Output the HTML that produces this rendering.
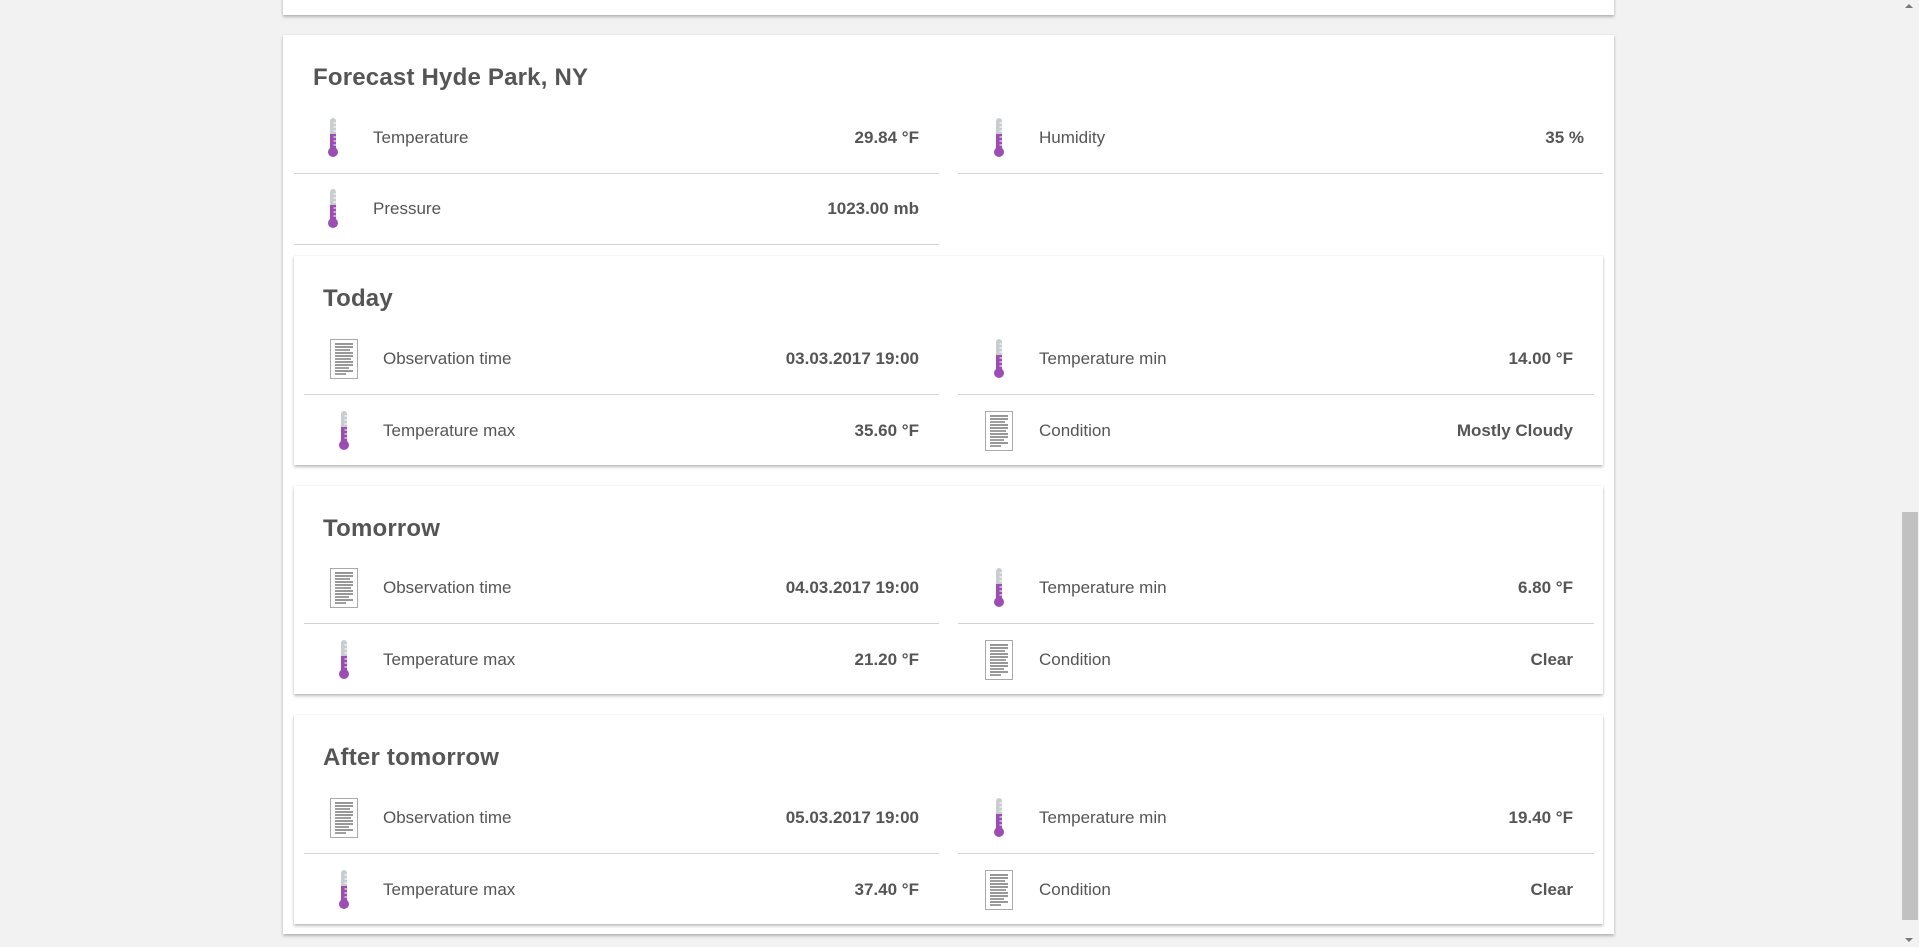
<!DOCTYPE html>
<html><head><meta charset="utf-8"><style>
*{box-sizing:border-box;margin:0;padding:0}
body{width:1919px;height:947px;background:#f2f2f2;font-family:"Liberation Sans",Arial,sans-serif;color:#555;position:relative;overflow:hidden}
.card{position:absolute;background:#fff;box-shadow:0 2px 3px rgba(0,0,0,.25),0 0 2px rgba(0,0,0,.08)}
.t{position:absolute;font-size:24px;font-weight:bold;color:#555;letter-spacing:0.2px}
.row{position:absolute;height:71px;border-bottom:1px solid #d4d4d4}
.row .ic{position:absolute;top:50%;transform:translate(-50%,-50%)}
.row .l{position:absolute;top:50%;transform:translateY(-50%);font-size:17px}
.row .v{position:absolute;top:50%;right:16px;transform:translateY(-50%);font-size:17px;font-weight:bold}
.nb{border-bottom:none}
.sb{position:absolute;right:0;top:0;width:19px;height:947px;background:#f2f2f2}
</style></head><body>
<svg width="0" height="0" style="position:absolute">
<defs>
<symbol id="th" viewBox="0 0 11 40"><rect x="2.5" y="0" width="6" height="32" rx="3" fill="#c9cdd0"/><rect x="2.5" y="16" width="6" height="18" fill="#9c4db3"/><circle cx="5.5" cy="34" r="5" fill="#9c4db3"/><g stroke="#fff" stroke-width="1"><line x1="6" y1="5" x2="8.5" y2="5"/><line x1="6" y1="9" x2="8.5" y2="9"/><line x1="6" y1="13" x2="8.5" y2="13"/><line x1="6" y1="19" x2="8.5" y2="19"/><line x1="6" y1="23" x2="8.5" y2="23"/><line x1="6" y1="27" x2="8.5" y2="27"/></g></symbol>
<symbol id="doc" viewBox="0 0 28 40"><rect x="0.5" y="0.5" width="27" height="39" fill="#fff" stroke="#aaa"/><g stroke="#777" stroke-width="1.4"><line x1="5" y1="5" x2="23" y2="5"/><line x1="5" y1="8" x2="23" y2="8"/><line x1="5" y1="11" x2="20" y2="11"/><line x1="5" y1="14" x2="23" y2="14"/><line x1="5" y1="17" x2="23" y2="17"/><line x1="5" y1="20" x2="21" y2="20"/><line x1="5" y1="23" x2="23" y2="23"/><line x1="5" y1="26" x2="23" y2="26"/><line x1="5" y1="29" x2="19" y2="29"/><line x1="5" y1="32" x2="23" y2="32"/><line x1="5" y1="35" x2="16" y2="35"/></g></symbol>
</defs></svg>

<div class="card" style="left:283px;top:-10px;width:1331px;height:25px"></div>

<div class="card" style="left:283px;top:35px;width:1331px;height:899px"></div>
<div class="t" style="left:313px;top:64px">Forecast Hyde Park, NY</div>

<div class="row" style="left:294px;top:103px;width:645px"><svg class="ic" style="left:39px" width="11" height="40"><use href="#th"/></svg><span class="l" style="left:79px">Temperature</span><span class="v" style="right:20px">29.84 °F</span></div>
<div class="row" style="left:958px;top:103px;width:645px"><svg class="ic" style="left:41px" width="11" height="40"><use href="#th"/></svg><span class="l" style="left:81px">Humidity</span><span class="v" style="right:19px">35 %</span></div>
<div class="row" style="left:294px;top:174px;width:645px"><svg class="ic" style="left:39px" width="11" height="40"><use href="#th"/></svg><span class="l" style="left:79px">Pressure</span><span class="v" style="right:20px">1023.00 mb</span></div>

<!-- Today -->
<div class="card" style="left:294px;top:256px;width:1309px;height:209px"></div>
<div class="t" style="left:323px;top:285px">Today</div>
<div class="row" style="left:304px;top:324px;width:635px"><svg class="ic" style="left:40px" width="28" height="40"><use href="#doc"/></svg><span class="l" style="left:79px">Observation time</span><span class="v" style="right:20px">03.03.2017 19:00</span></div>
<div class="row" style="left:958px;top:324px;width:636px"><svg class="ic" style="left:41px" width="11" height="40"><use href="#th"/></svg><span class="l" style="left:81px">Temperature min</span><span class="v" style="right:21px">14.00 °F</span></div>
<div class="row nb" style="left:304px;top:395px;width:635px"><svg class="ic" style="left:40px" width="11" height="40"><use href="#th"/></svg><span class="l" style="left:79px">Temperature max</span><span class="v" style="right:20px">35.60 °F</span></div>
<div class="row nb" style="left:958px;top:395px;width:636px"><svg class="ic" style="left:41px" width="28" height="40"><use href="#doc"/></svg><span class="l" style="left:81px">Condition</span><span class="v" style="right:21px">Mostly Cloudy</span></div>

<!-- Tomorrow -->
<div class="card" style="left:294px;top:486px;width:1309px;height:208px"></div>
<div class="t" style="left:323px;top:515px">Tomorrow</div>
<div class="row" style="left:304px;top:553px;width:635px"><svg class="ic" style="left:40px" width="28" height="40"><use href="#doc"/></svg><span class="l" style="left:79px">Observation time</span><span class="v" style="right:20px">04.03.2017 19:00</span></div>
<div class="row" style="left:958px;top:553px;width:636px"><svg class="ic" style="left:41px" width="11" height="40"><use href="#th"/></svg><span class="l" style="left:81px">Temperature min</span><span class="v" style="right:21px">6.80 °F</span></div>
<div class="row nb" style="left:304px;top:624px;width:635px"><svg class="ic" style="left:40px" width="11" height="40"><use href="#th"/></svg><span class="l" style="left:79px">Temperature max</span><span class="v" style="right:20px">21.20 °F</span></div>
<div class="row nb" style="left:958px;top:624px;width:636px"><svg class="ic" style="left:41px" width="28" height="40"><use href="#doc"/></svg><span class="l" style="left:81px">Condition</span><span class="v" style="right:21px">Clear</span></div>

<!-- After tomorrow -->
<div class="card" style="left:294px;top:715px;width:1309px;height:209px"></div>
<div class="t" style="left:323px;top:744px">After tomorrow</div>
<div class="row" style="left:304px;top:783px;width:635px"><svg class="ic" style="left:40px" width="28" height="40"><use href="#doc"/></svg><span class="l" style="left:79px">Observation time</span><span class="v" style="right:20px">05.03.2017 19:00</span></div>
<div class="row" style="left:958px;top:783px;width:636px"><svg class="ic" style="left:41px" width="11" height="40"><use href="#th"/></svg><span class="l" style="left:81px">Temperature min</span><span class="v" style="right:21px">19.40 °F</span></div>
<div class="row nb" style="left:304px;top:854px;width:635px"><svg class="ic" style="left:40px" width="11" height="40"><use href="#th"/></svg><span class="l" style="left:79px">Temperature max</span><span class="v" style="right:20px">37.40 °F</span></div>
<div class="row nb" style="left:958px;top:854px;width:636px"><svg class="ic" style="left:41px" width="28" height="40"><use href="#doc"/></svg><span class="l" style="left:81px">Condition</span><span class="v" style="right:21px">Clear</span></div>

<div class="sb"><div style="position:absolute;left:5px;top:4px;width:0;height:0;border-left:4px solid transparent;border-right:4px solid transparent;border-bottom:4px solid #777"></div><div style="position:absolute;left:2px;top:512px;width:16px;height:408px;background:#c1c1c1"></div><div style="position:absolute;left:5px;top:938px;width:0;height:0;border-left:4px solid transparent;border-right:4px solid transparent;border-top:4px solid #777"></div></div>
</body></html>
